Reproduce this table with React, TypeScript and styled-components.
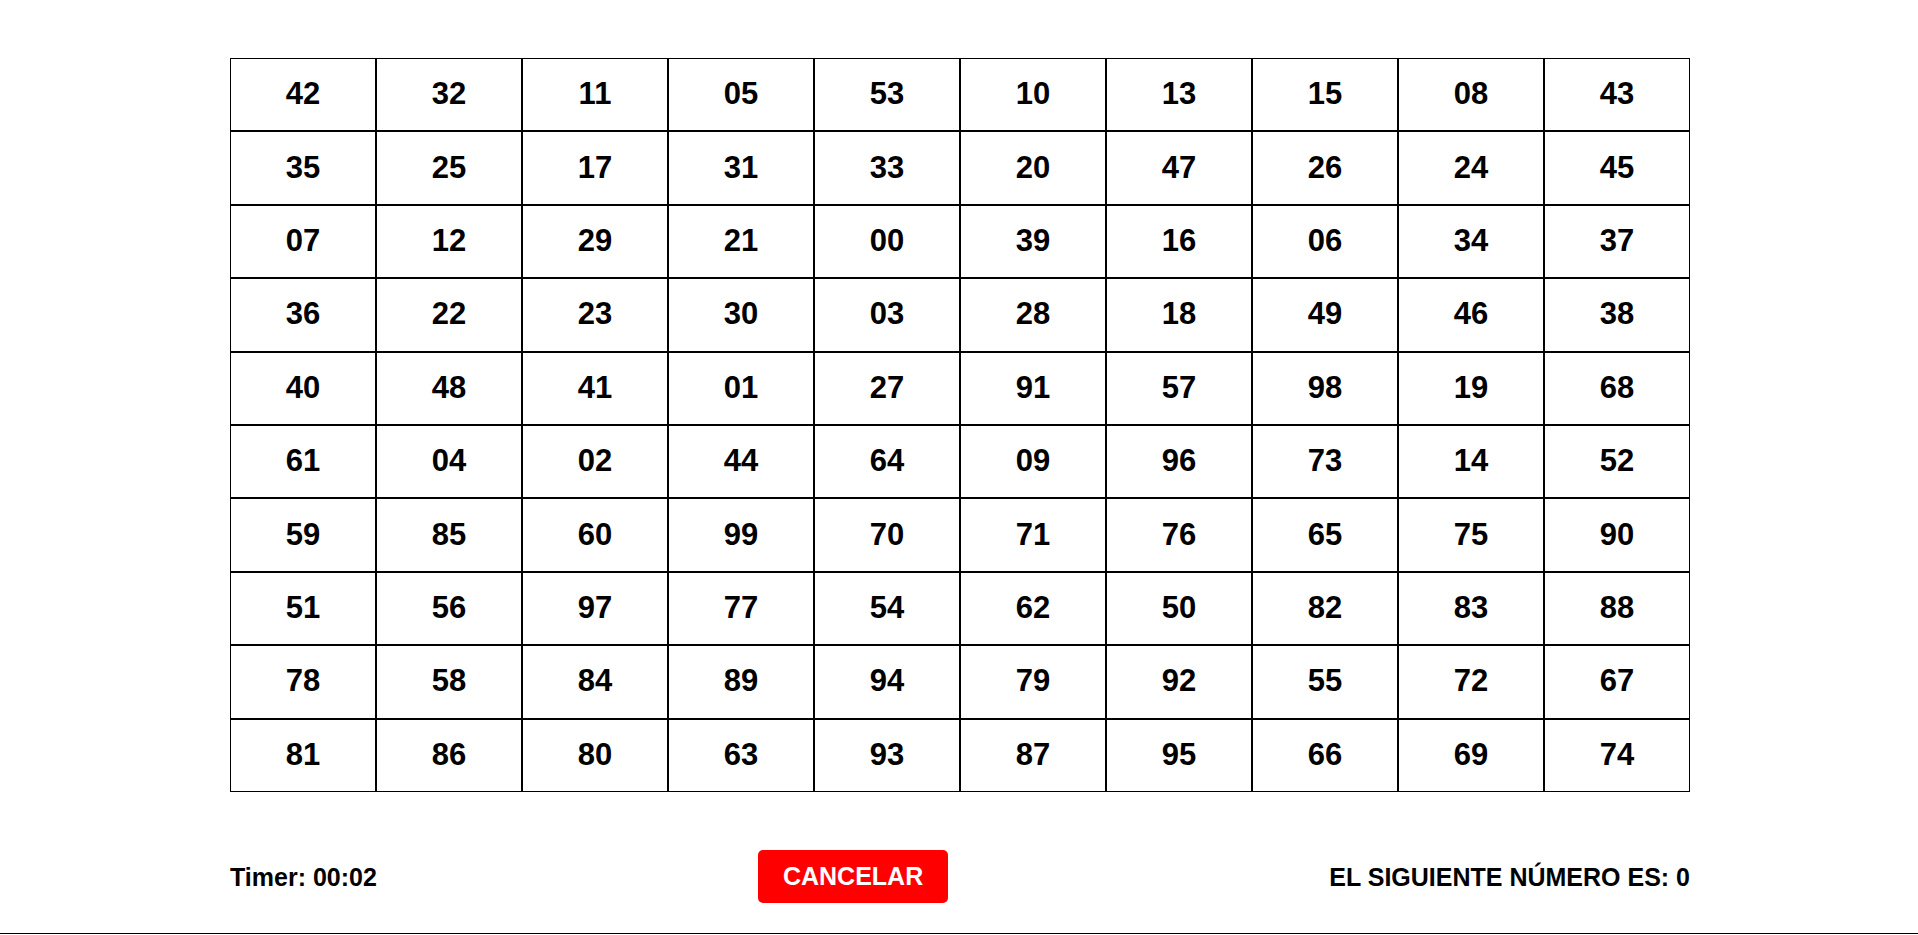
import React from "react";
import styled, { createGlobalStyle } from "styled-components";

const GlobalStyle = createGlobalStyle`
  html, body {
    margin: 0;
    padding: 0;
    background: #ffffff;
    font-family: "Liberation Sans", Arial, sans-serif;
    color: #000000;
  }
`;

const Page = styled.div`
  padding: 58px 0 30px 230px;
  border-bottom: 1px solid #000000;
`;

const Board = styled.div`
  display: grid;
  grid-template-columns: repeat(10, 146px);
  grid-template-rows: repeat(10, 1fr);
  width: 1460px;
  height: 734px;
`;

const Cell = styled.div`
  display: flex;
  align-items: center;
  justify-content: center;
  border: 1px solid #000000;
  padding-bottom: 2px;
  font-size: 31px;
  font-weight: 700;
  line-height: 1;
`;

const Footer = styled.div`
  display: flex;
  align-items: center;
  justify-content: space-between;
  width: 1460px;
  margin-top: 58px;
`;

const Label = styled.span`
  font-size: 25px;
  font-weight: 700;
  padding-top: 2px;
`;

const CancelButton = styled.button`
  font-family: "Liberation Sans", Arial, sans-serif;
  font-size: 25px;
  font-weight: 700;
  line-height: 27px;
  color: #ffffff;
  background: #ff0000;
  border: none;
  border-radius: 5px;
  padding: 13px 25px;
  cursor: pointer;
`;

const numbers: string[][] = [
  ["42", "32", "11", "05", "53", "10", "13", "15", "08", "43"],
  ["35", "25", "17", "31", "33", "20", "47", "26", "24", "45"],
  ["07", "12", "29", "21", "00", "39", "16", "06", "34", "37"],
  ["36", "22", "23", "30", "03", "28", "18", "49", "46", "38"],
  ["40", "48", "41", "01", "27", "91", "57", "98", "19", "68"],
  ["61", "04", "02", "44", "64", "09", "96", "73", "14", "52"],
  ["59", "85", "60", "99", "70", "71", "76", "65", "75", "90"],
  ["51", "56", "97", "77", "54", "62", "50", "82", "83", "88"],
  ["78", "58", "84", "89", "94", "79", "92", "55", "72", "67"],
  ["81", "86", "80", "63", "93", "87", "95", "66", "69", "74"],
];

export default function App() {
  return (
    <>
      <GlobalStyle />
      <Page>
        <Board>
          {numbers.flat().map((n, i) => (
            <Cell key={i}>{n}</Cell>
          ))}
        </Board>
        <Footer>
          <Label>Timer: 00:02</Label>
          <CancelButton>CANCELAR</CancelButton>
          <Label>EL SIGUIENTE NÚMERO ES: 0</Label>
        </Footer>
      </Page>
    </>
  );
}
